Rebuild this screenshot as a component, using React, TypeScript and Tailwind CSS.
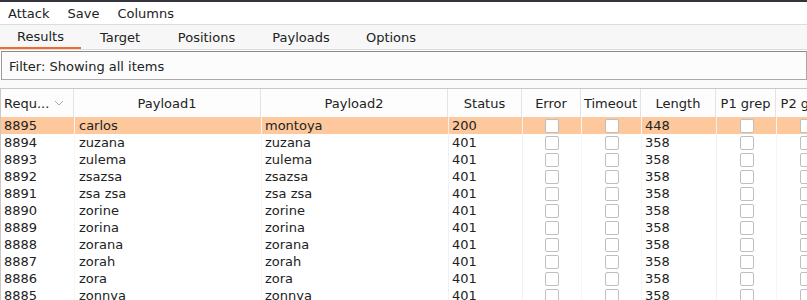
const rows = [
  ["8895", "carlos", "montoya", "200", "448"],
  ["8894", "zuzana", "zuzana", "401", "358"],
  ["8893", "zulema", "zulema", "401", "358"],
  ["8892", "zsazsa", "zsazsa", "401", "358"],
  ["8891", "zsa zsa", "zsa zsa", "401", "358"],
  ["8890", "zorine", "zorine", "401", "358"],
  ["8889", "zorina", "zorina", "401", "358"],
  ["8888", "zorana", "zorana", "401", "358"],
  ["8887", "zorah", "zorah", "401", "358"],
  ["8886", "zora", "zora", "401", "358"],
  ["8885", "zonnya", "zonnya", "401", "358"],
];

const tabs = [
  { name: "Results", w: "w-[81px]" },
  { name: "Target", w: "w-[78px]" },
  { name: "Positions", w: "w-[95px]" },
  { name: "Payloads", w: "w-[94px]" },
  { name: "Options", w: "w-[86px]" },
];

const Box = () => (
  <span className="block w-[14px] h-[14px] rounded-[2px] border border-[#bfbfbf] bg-white"></span>
);

const App = () => {
  return (
    <div
      className="w-[807px] h-[300px] overflow-hidden bg-white text-[13px] text-[#222] leading-none"
      style={{ fontFamily: '"DejaVu Sans", sans-serif' }}
    >
      {/* window strip */}
      <div className="h-[2px] bg-[#34343c]"></div>

      {/* Menu */}
      <div className="h-[22px] flex items-center pl-[8px] gap-[18px] bg-white">
        <span>Attack</span>
        <span>Save</span>
        <span>Columns</span>
      </div>

      {/* Tabs */}
      <div className="h-[26px] flex border-t border-b border-[#dcdcdc] bg-[#f7f7f7]">
        {tabs.map((t, i) => (
          <div
            key={t.name}
            className={
              i === 0
                ? `${t.w} flex items-center justify-center pt-[1px] border-b-2 border-[#f26a2c]`
                : `${t.w} flex items-center justify-center`
            }
          >
            {t.name}
          </div>
        ))}
      </div>

      {/* Filter */}
      <div className="pt-[1px] pl-[1px]">
        <div className="h-[29px] flex items-center pl-[7px] pt-[2px] border border-t-[#8a8a8a] border-l-[#9a9a9a] border-b-[#a8a8a8] border-r-[#a8a8a8] bg-[#fcfcfc]">
          Filter: Showing all items
        </div>
      </div>
      <div className="h-[8px] bg-[#fafafa]"></div>

      {/* Table */}
      <div className="border-t border-[#c8c8c8] w-[900px] flex">
        <div className="w-[1px] bg-[#c8c8c8]"></div>
        <div>
          <div className="h-[28px] flex bg-[#fdfdfd]">
            <div className="w-[73px] flex items-center pl-[3px] border-r border-[#e4e4e4]">
              <span>Requ...</span>
              <svg width="10" height="6" viewBox="0 0 10 6" className="ml-[5px]">
                <polyline points="1,1 5,5 9,1" fill="none" stroke="#aaaaaa" strokeWidth="1" />
              </svg>
            </div>
            <div className="w-[187px] flex items-center justify-center border-r border-[#e4e4e4]">Payload1</div>
            <div className="w-[187px] flex items-center justify-center border-r border-[#e4e4e4]">Payload2</div>
            <div className="w-[74px] flex items-center justify-center border-r border-[#e4e4e4]">Status</div>
            <div className="w-[59px] flex items-center justify-center border-r border-[#e4e4e4]">Error</div>
            <div className="w-[60px] flex items-center justify-center border-r border-[#e4e4e4]">Timeout</div>
            <div className="w-[75px] flex items-center justify-center border-r border-[#e4e4e4]">Length</div>
            <div className="w-[60px] flex items-center justify-center border-r border-[#e4e4e4]">P1 grep</div>
            <div className="w-[60px] flex items-center justify-center border-r border-[#e4e4e4]">P2 grep</div>
          </div>

          {rows.map((r, i) => (
            <div key={r[0]} className={i === 0 ? "h-[17px] flex bg-[#fcc89c]" : "h-[17px] flex"}>
              <div className="w-[73px] flex items-center pl-[3px]">{r[0]}</div>
              <div className="w-[187px] flex items-center pl-[4px] border-l border-[#f6f6f6]">{r[1]}</div>
              <div className="w-[187px] flex items-center pl-[3px] border-l border-[#f6f6f6]">{r[2]}</div>
              <div className="w-[74px] flex items-center pl-[3px] border-l border-[#f1f1f1]">{r[3]}</div>
              <div className="w-[59px] flex items-center justify-center border-l border-[#f1f1f1]">
                <Box />
              </div>
              <div className="w-[60px] flex items-center justify-center border-l border-[#f6f6f6]">
                <Box />
              </div>
              <div className="w-[75px] flex items-center pl-[3px] border-l border-[#f6f6f6]">{r[4]}</div>
              <div className="w-[60px] flex items-center justify-center border-l border-[#f1f1f1]">
                <Box />
              </div>
              <div className="w-[60px] flex items-center justify-center border-l border-[#f6f6f6]">
                <Box />
              </div>
            </div>
          ))}
        </div>
      </div>
    </div>
  );
};

export default App;
